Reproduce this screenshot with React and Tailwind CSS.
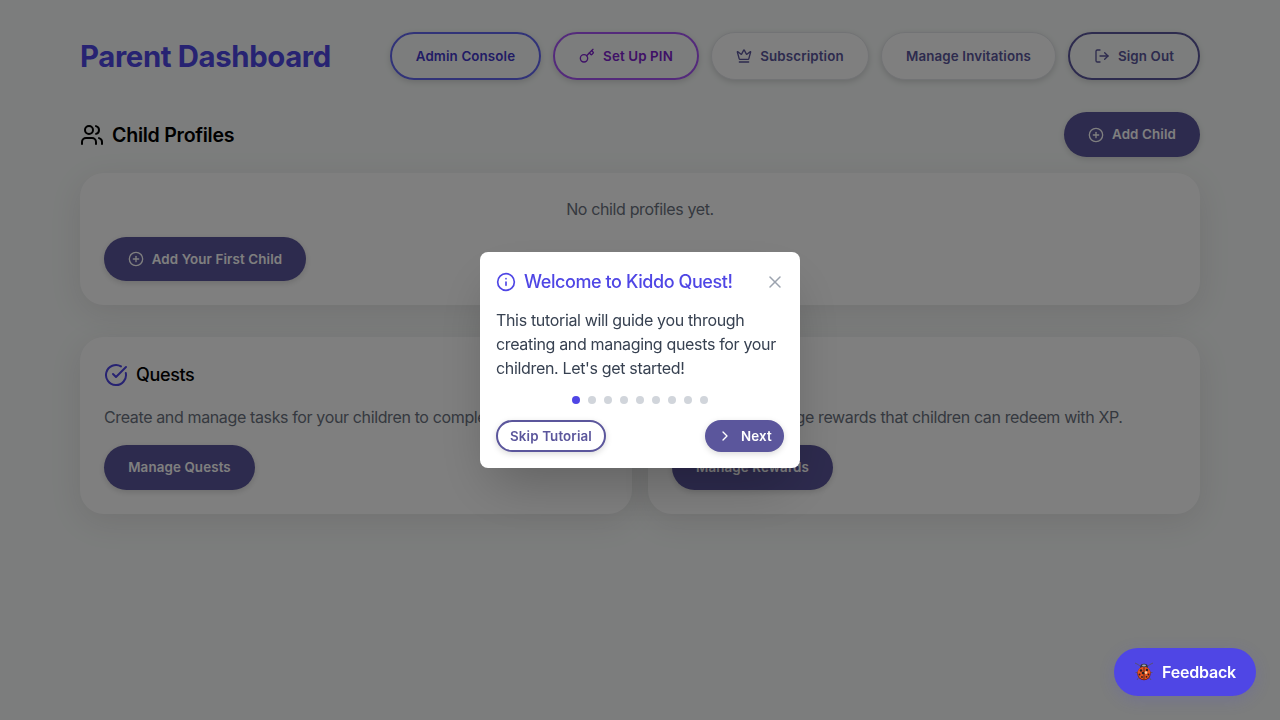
import React from "react";
import { Users, Key, Crown, LogOut, CirclePlus, CircleCheckBig, Gift, Info, X, ChevronRight } from "lucide-react";

const shadow = "shadow-[0_2px_6px_rgba(0,0,0,0.15)]";
const base = "flex shrink-0 items-center justify-center rounded-full text-[13.33px] tracking-[0.01em] font-semibold whitespace-nowrap " + shadow;

function HeaderButton({ icon: Icon, width, tone, children }) {
  return (
    <button className={`${base} h-12 gap-2 ${width} ${tone}`}>
      {Icon && <Icon size={16} strokeWidth={2} />}
      <span className="pt-0.5">{children}</span>
    </button>
  );
}

function SolidButton({ icon: Icon, size, children }) {
  return (
    <button className={`${base} gap-2 bg-[#5b569c] text-white ${size}`}>
      {Icon && <Icon size={16} />}
      <span>{children}</span>
    </button>
  );
}

const card = "rounded-3xl bg-white p-6 shadow-[0_8px_32px_rgba(60,30,40,0.10)]";

function FeatureCard({ icon: Icon, title, text, action, size }) {
  return (
    <section className={`${card} h-[177px]`}>
      <div className="flex h-7 items-center gap-2">
        <Icon size={24} className="text-[#4f46e5]" />
        <h3 className="text-lg font-medium tracking-[-0.02em] text-black">{title}</h3>
      </div>
      <p className="mt-4 mb-4 h-6 text-base tracking-[-0.023em] whitespace-nowrap text-[#6b7280]">{text}</p>
      <SolidButton size={size}>{action}</SolidButton>
    </section>
  );
}

function Tutorial() {
  return (
    <div className="h-[216px] w-80 rounded-lg bg-white p-4 shadow-2xl">
      <div className="flex h-7 items-center">
        <Info size={20} className="mr-2 text-[#4f46e5]" />
        <h3 className="text-lg font-medium tracking-[-0.023em] text-[#4f46e5]">Welcome to Kiddo Quest!</h3>
        <button className="-mr-px ml-auto text-[#9ca3af]"><X size={20} strokeWidth={1.8} /></button>
      </div>
      <p className="mt-3 text-base leading-6 tracking-[-0.021em] whitespace-nowrap text-[#374151]">
        This tutorial will guide you through<br />creating and managing quests for your<br />children. Let's get started!
      </p>
      <div className="mt-4 flex justify-center gap-2">
        {Array.from({ length: 9 }, (_, i) => (
          <span key={i} className={`size-2 rounded-full ${i === 0 ? "bg-[#4f46e5]" : "bg-[#d1d5db]"}`} />
        ))}
      </div>
      <div className="mt-4 flex justify-between">
        <button className={`${base} h-8 w-[110px] border-2 border-[#5b569c] bg-white text-[#5b569c]`}><span className="pt-0.5">Skip Tutorial</span></button>
        <button className={`${base} h-8 w-[79px] gap-2 bg-[#5b569c] text-white`}>
          <ChevronRight size={16} />
          <span className="pt-0.5">Next</span>
        </button>
      </div>
    </div>
  );
}

function Ladybug() {
  return (
    <svg width="20" height="20" viewBox="0 0 20 20" fill="none">
      <path d="M7 5 4 2.500 1 1M13 5l3-2.500L19 1M4 10.500H1.500M16 10.500h2.500M5 15l-2 3M15 15l2 3" stroke="#574f75" strokeWidth="1" />
      <ellipse cx="10" cy="4.800" rx="3.800" ry="3" fill="#34333b" />
      <ellipse cx="10" cy="3.600" rx="2" ry="1" fill="#9eabb8" />
      <circle cx="10" cy="11.500" r="6.700" fill="#7a2415" />
      <circle cx="10" cy="11" r="6.300" fill="#e65320" />
      <path d="M10 5v12" stroke="#37201d" strokeWidth=".8" />
      <g fill="#2b2022">
        <circle cx="7" cy="8.500" r="1.200" /><circle cx="13" cy="8" r="1.200" />
        <circle cx="9" cy="11" r="1.300" /><circle cx="5.500" cy="12.500" r="1" />
        <circle cx="14.500" cy="12.500" r="1" /><circle cx="8" cy="15" r=".9" />
        <circle cx="12.500" cy="14.800" r=".9" />
      </g>
      <circle cx="12" cy="10.600" r="1.300" fill="#ffd2a0" />
    </svg>
  );
}

export default function App() {
  return (
    <div className="h-screen overflow-hidden bg-[#f8fbfa] font-['Inter',sans-serif]">
      <main className="px-20 pt-8">
        <header className="flex h-12 items-center justify-between">
          <h1 className="pt-0.5 text-[29.3px] leading-9 font-bold tracking-[-0.012em] text-[#4f46e5]">Parent Dashboard</h1>
          <div className="flex gap-3">
            <HeaderButton width="w-[151px]" tone="border-2 border-[#6366f1] text-[#4338ca]">Admin Console</HeaderButton>
            <HeaderButton icon={Key} width="w-[146px]" tone="border-2 border-[#a855f7] text-[#7e22ce]">Set Up PIN</HeaderButton>
            <HeaderButton icon={Crown} width="w-[158px]" tone="border border-[#e5e7eb] bg-white text-[#5b569c]">Subscription</HeaderButton>
            <HeaderButton width="w-[175px]" tone="border border-[#e5e7eb] bg-white text-[#5b569c]">Manage Invitations</HeaderButton>
            <HeaderButton icon={LogOut} width="w-[132px]" tone="border-2 border-[#5b569c] text-[#5b569c]">Sign Out</HeaderButton>
          </div>
        </header>
        <div className="mt-8 mb-4 flex h-[45px] items-center justify-between">
          <h2 className="flex items-center gap-2 text-[19.6px] leading-7 font-semibold tracking-[-0.014em] text-black"><Users size={24} />Child Profiles</h2>
          <SolidButton icon={CirclePlus} size="h-[45px] w-[136px]">Add Child</SolidButton>
        </div>
        <section className={`${card} h-[132px]`}>
          <p className="mb-4 h-6 text-center text-base tracking-[-0.023em] text-[#6b7280]">No child profiles yet.</p>
          <SolidButton icon={CirclePlus} size="h-11 w-[202px] [&>span]:pt-0.5">Add Your First Child</SolidButton>
        </section>
        <div className="mt-8 grid grid-cols-2 gap-4">
          <FeatureCard icon={CircleCheckBig} title="Quests" text="Create and manage tasks for your children to complete." action="Manage Quests" size="h-[45px] w-[151px]" />
          <FeatureCard icon={Gift} title="Rewards" text="Create and manage rewards that children can redeem with XP." action="Manage Rewards" size="h-[45px] w-[161px]" />
        </div>
      </main>
      <div className="fixed inset-0 flex items-center justify-center bg-black/50">
        <Tutorial />
      </div>
      <button className="fixed right-6 bottom-6 flex h-12 w-[142px] items-center justify-center gap-2 rounded-full bg-[#4f46e5] text-base font-semibold tracking-[-0.014em] text-white shadow-[0_4px_16px_rgba(80,70,229,0.18)]">
        <Ladybug />
        Feedback
      </button>
    </div>
  );
}
